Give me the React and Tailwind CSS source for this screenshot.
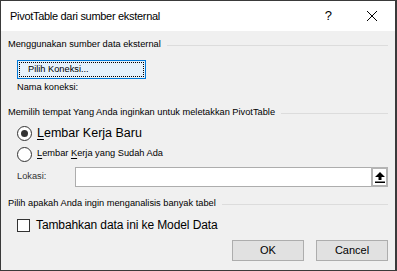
import React from "react";

const font = { fontFamily: '"Liberation Sans", Arial, sans-serif' };

const Section = ({ title, className = "" }) => (
  <div className={`h-[14px] flex items-center pr-[7px] ${className}`}>
    <span className="text-[9.25px] text-black leading-none whitespace-nowrap">{title}</span>
    <div className="flex-1 ml-[6px] h-px bg-[#dcdcdc]" />
  </div>
);

const App = () => {
  return (
    <div
      className="w-[397px] h-[271px] flex flex-col bg-[#f0f0f0] border border-[#3a3a3a] border-r-2 overflow-hidden"
      style={font}
    >
      {/* title bar */}
      <div className="h-[30px] bg-white flex items-center shrink-0">
        <span className="ml-[9px] text-[11px] tracking-[-0.3px] text-black">PivotTable dari sumber eksternal</span>
        <span className="ml-auto text-[13px] text-black mr-[34px]">?</span>
        <svg width="12" height="12" viewBox="0 0 12 12" className="mr-[17px]">
          <path d="M1 1 L11 11 M11 1 L1 11" stroke="#000" strokeWidth="1" />
        </svg>
      </div>

      <div className="flex flex-col pl-[7px]">
        <Section title="Menggunakan sumber data eksternal" className="mt-[7px]" />

        <div className="ml-[9px] mt-[8px] w-[129px] h-[19px] border border-[#0078d7] bg-[#e5f1fb] p-px">
          <div className="h-full border border-dotted border-black flex items-center pl-[8px]">
            <span className="text-[9.25px] text-black leading-none">Pilih Koneksi...</span>
          </div>
        </div>

        <div className="h-[14px] mt-[2px] ml-[9px] flex items-center">
          <span className="text-[9.25px] text-black leading-none">Nama koneksi:</span>
        </div>

        <Section title="Memilih tempat Yang Anda inginkan untuk meletakkan PivotTable" className="mt-[11px]" />

        <div className="h-[16px] ml-[9px] mt-[5px] flex items-center">
          <div className="w-[15px] h-[15px] rounded-full border border-[#333] bg-white flex items-center justify-center">
            <div className="w-[7px] h-[7px] rounded-full bg-[#333]" />
          </div>
          <span className="ml-[5px] text-[12.5px] text-black leading-none">
            <span className="underline underline-offset-2">L</span>embar Kerja Baru
          </span>
        </div>

        <div className="h-[16px] ml-[9px] mt-[5px] flex items-center">
          <div className="w-[15px] h-[15px] rounded-full border border-[#333] bg-white" />
          <span className="ml-[5px] text-[9.25px] text-black leading-none">
            <span className="underline underline-offset-2">L</span>embar <span className="underline underline-offset-2">K</span>erja yang Sudah Ada
          </span>
        </div>

        <div className="h-[20px] ml-[9px] mt-[5px] flex items-center pr-[7px]">
          <span className="w-[58px] text-[9.25px] text-[#333] leading-none">Lokasi:</span>
          <div className="flex-1 h-[20px] bg-white border border-[#adadad] border-r-0" />
          <div className="w-[17px] h-[20px] border-2 border-[#b4b4b4] bg-white flex items-center justify-center">
            <svg width="10" height="11" viewBox="0 0 10 11">
              <path d="M5 0 L10 5 L6.5 5 L6.5 8 L3.5 8 L3.5 5 L0 5 Z" fill="#000" />
              <rect x="0" y="9.5" width="10" height="1.5" fill="#000" />
            </svg>
          </div>
        </div>

        <Section title="Pilih apakah Anda ingin menganalisis banyak tabel" className="mt-[10px]" />

        <div className="h-[16px] ml-[9px] mt-[6px] flex items-center">
          <div className="w-[13px] h-[13px] border border-[#333] bg-white" />
          <span className="ml-[6px] text-[12px] tracking-[-0.1px] text-black leading-none">Tambahkan data ini ke Model Data</span>
        </div>

        <div className="mt-[7px] flex justify-end gap-[12px] pr-[7px]">
          <div className="w-[72px] h-[21px] bg-[#e1e1e1] border border-[#adadad] flex items-center justify-center text-[11px] text-black">OK</div>
          <div className="w-[72px] h-[21px] bg-[#e1e1e1] border border-[#adadad] flex items-center justify-center text-[11px] text-black">Cancel</div>
        </div>
      </div>
    </div>
  );
};

export default App;
